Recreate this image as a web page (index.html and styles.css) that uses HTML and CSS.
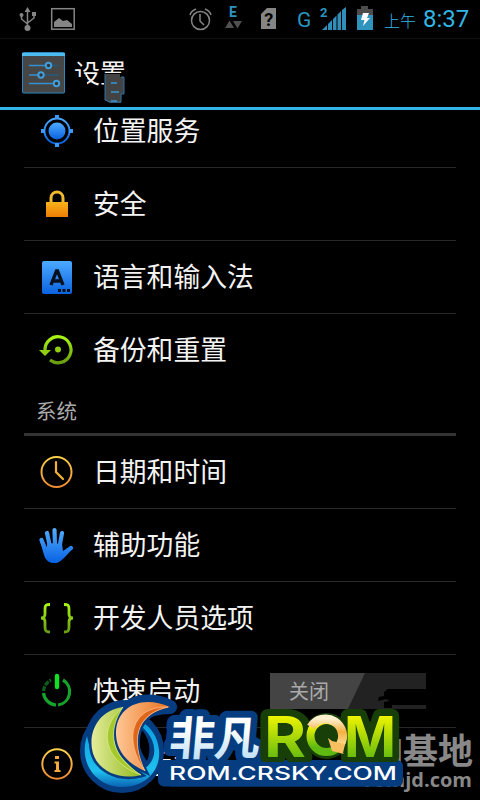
FILE: index.html
```html
<!DOCTYPE html>
<html lang="zh-CN">
<head>
    <meta charset="UTF-8">
    <meta name="viewport" content="width=device-width, initial-scale=1.0">
    <title>设置</title>
    <link rel="stylesheet" href="styles.css">
</head>
<body>
    <div class="screen">
        <!-- 状态栏 -->
        <div class="status-bar">
            <svg class="status-icons" width="380" height="38" viewBox="0 0 380 38">
                <g fill="none" stroke="#858585" stroke-width="1.5">
                    <path d="M27.5 10v18M21.500 15v4l6 5M34 14v4l-6.500 5"/>
                    <rect x="51.700" y="8.700" width="22.500" height="20.500"/>
                    <circle cx="200.500" cy="20.500" r="9"/>
                    <path d="M200 14v7l4 4M190 15q1-4 6-6M211 15q-1-4-6-6"/>
                </g>
                <g fill="#858585">
                    <path d="M27.500 7l3 5h-6zM32 12h4v4h-4z"/>
                    <circle cx="21.500" cy="15" r="2"/>
                    <circle cx="27.500" cy="28" r="3"/>
                    <path d="M54 27v-5l5-4 4 3 4-1 5 4v3z"/>
                    <path d="M267 8h9v21h-15V14z"/>
                </g>
                <path d="M225 28l4.500-7.500 4.500 7.500zM233 21h9l-4.500 7.500z" fill="#505050"/>
                <text class="sim-mark" x="268.700" y="26">?</text>
                <text class="status-e" x="229" y="17">E</text>
                <text class="status-g" x="297" y="27">G</text>
                <text class="status-sim" x="320" y="17">2</text>
                <path d="M322 30l5-5v5zM328 24l4-4v10h-4zM333 19l3.500-3.500V30H333zM337.500 14.500l3.500-3.500v19h-3.500zM342 10l4-3v23h-4z" fill="#2f8fb8"/>
                <path d="M357 15V9h4V6h7v3h5v6z" fill="#4c4c4c"/>
                <path d="M357 15h16v15h-16z" fill="#2f94bd"/>
                <path d="M363 13h6l-2 5h3l-7 8 1.500-6H361z" fill="#fff"/>
            </svg>
            <span class="ampm">上午</span>
            <span class="clock">8:37</span>
        </div>

        <!-- 标题栏 -->
        <div class="title-bar">
            <svg width="44" height="42" viewBox="0 0 44 42">
                <rect x=".5" y=".5" width="42" height="40.500" rx="1" fill="#464646" stroke="#2b87bd"/>
                <path d="M0 1h43v3H0z" fill="#4dbdf0"/>
                <path d="M7 13.500h16M7 23h9M7 31.500h25" stroke="#3490d0" stroke-width="1.500"/>
                <path d="M30 13.500h7M22 23h15" stroke="#28597b" stroke-width="1.500"/>
                <g fill="#333" stroke="#3f9edc" stroke-width="2">
                    <circle cx="26.500" cy="13.500" r="2.700"/>
                    <circle cx="19" cy="23" r="2.700"/>
                    <circle cx="34.500" cy="31.500" r="2.700"/>
                </g>
            </svg>
            <h1>设置</h1>
            <svg class="fragment" width="51" height="32" viewBox="0 0 51 32">
                <path d="M29 0h22v32H29zM0 4h12v12H0z" fill="#000"/>
                <path d="M30 1h15v3h4v17h-3v9H35l-5-3z" fill="#434343"/>
                <path d="M30 1v26l5 2h11v-8h3V4h-3" fill="none" stroke="#2d75a8"/>
                <path d="M36 10h6M36 19h8M36 28h6" stroke="#3796d2" stroke-width="1.500"/>
            </svg>
        </div>

        <!-- 设置列表 -->
        <div class="list">
            <div class="row">
                <svg class="icon" viewBox="0 0 36 36">
                    <circle cx="18" cy="18" r="12.500" fill="none" stroke="url(#blue)" stroke-width="2"/>
                    <circle cx="18" cy="18" r="8.500" fill="url(#blue)"/>
                    <path d="M16 2h4v4h-4zM16 30h4v4h-4zM2 16h4v4H2zM30 16h4v4h-4z" fill="#3c98f8"/>
                </svg>
                <span class="label">位置服务</span>
            </div>
            <div class="row">
                <svg class="icon" viewBox="0 0 36 36">
                    <path d="M12 17v-5c0-8 12-8 12 0v5" fill="none" stroke="#efba2c" stroke-width="3"/>
                    <path d="M7 16h22v15H7z" fill="url(#orange)"/>
                </svg>
                <span class="label">安全</span>
            </div>
            <div class="row">
                <svg class="icon" viewBox="0 0 36 36">
                    <rect x="3" y="2" width="30" height="33" rx="2" fill="url(#blue)"/>
                    <path d="M12 26l5.500-14h1L24 26M14 22h8" fill="none" stroke="#06111f" stroke-width="3.400"/>
                    <path d="M19 30h3v3h-3zM23.500 30h3v3h-3zM28 30h3v3h-3z" fill="#06111f"/>
                </svg>
                <span class="label">语言和输入法</span>
            </div>
            <div class="row last">
                <svg class="icon" viewBox="0 0 36 36">
                    <path d="M6 18A13 13 0 1 1 11 28" fill="none" stroke="url(#green)" stroke-width="3.200"/>
                    <path d="M0 18h12l-6 6z" fill="#91d010"/>
                    <circle cx="19" cy="17.500" r="3" fill="#91d010"/>
                </svg>
                <span class="label">备份和重置</span>
            </div>
            <div class="section">系统</div>
            <div class="row">
                <svg class="icon" viewBox="0 0 36 36">
                    <circle cx="17.500" cy="18" r="15" fill="none" stroke="url(#amber)" stroke-width="2"/>
                    <path d="M17 8v10l7 7" fill="none" stroke="#f5b234" stroke-width="2.200" stroke-linecap="round"/>
                </svg>
                <span class="label">日期和时间</span>
            </div>
            <div class="row">
                <svg class="icon" viewBox="0 0 36 36">
                    <path d="M7 24L2.500 13M11 20L8 6M16 18l-.5-15M20.500 20L23 6M25 26l7-5" stroke="url(#hand)" stroke-width="4.200" stroke-linecap="round"/>
                    <path d="M1 14l4 14c2 7 8 9 13 8 5-2 10-8 15-14l-9 2-1-7-14-1-2 5z" fill="url(#hand)"/>
                </svg>
                <span class="label">辅助功能</span>
            </div>
            <div class="row">
                <svg class="icon" viewBox="0 0 36 36">
                    <path d="M11 4.500C7 4.500 6 5 6 9v5q0 4-4 4 4 0 4 4v5c0 4 1 5 5 5M25 4.500c4 0 5 .5 5 4.500v5q0 4 4 4-4 0-4 4v5c0 4-1 5-5 5" fill="none" stroke="url(#green)" stroke-width="2.800"/>
                </svg>
                <span class="label">开发人员选项</span>
            </div>
            <div class="row">
                <svg class="icon" viewBox="0 0 36 36">
                    <path d="M24 7A13.500 13.500 0 0 1 19 32M17 32A13.500 13.500 0 0 1 4.500 20" fill="none" stroke="#16a32c" stroke-width="3.200"/>
                    <path d="M4.500 18A13.500 13.500 0 0 1 12 7" fill="none" stroke="#0b5f1a" stroke-width="3.200" stroke-dasharray="5 1"/>
                    <path d="M18 3v11" stroke="#13df23" stroke-width="4.400" stroke-linecap="round"/>
                </svg>
                <span class="label">快速启动</span>
                <div class="switch">
                    <span class="switch-thumb">关闭</span>
                    <svg class="switch-noise" width="50" height="30" viewBox="0 0 50 30">
                        <path d="M50 0v5h-9v6h9v16H16v3H8v-6l6-1-4-2-8 2 1-4 5-1v-4l4-3h29V5h9z" fill="#000"/>
                    </svg>
                </div>
            </div>
            <div class="row">
                <svg class="icon" viewBox="0 0 36 36">
                    <circle cx="18" cy="18" r="14.700" fill="none" stroke="url(#amber)" stroke-width="2"/>
                    <path d="M16 10h4v3h-4zM15.500 15.500H20V24h1.500v2h-6v-2H17v-6.500h-1.500z" fill="#f5aa3c"/>
                </svg>
                <span class="label">关于手机</span>
            </div>
        </div>

        <!-- 水印 -->
        <svg class="watermark" width="410" height="130" viewBox="70 670 410 130">
            <defs>
                <linearGradient id="blue" x2="0" y2="1"><stop stop-color="#4caaff"/><stop offset="1" stop-color="#0b62df"/></linearGradient>
                <linearGradient id="hand" gradientUnits="userSpaceOnUse" x1="0" y1="0" x2="0" y2="36"><stop stop-color="#55b0ff"/><stop offset="1" stop-color="#0861e2"/></linearGradient>
                <linearGradient id="orange" x2="0" y2="1"><stop stop-color="#f9b21c"/><stop offset="1" stop-color="#ee7d05"/></linearGradient>
                <linearGradient id="amber" x2="0" y2="1"><stop stop-color="#f9d04a"/><stop offset="1" stop-color="#ef8a35"/></linearGradient>
                <linearGradient id="green" x2="0" y2="1"><stop stop-color="#a8f416"/><stop offset="1" stop-color="#6a9d12"/></linearGradient>
                <linearGradient id="lime" x2="0" y2="1"><stop offset=".2" stop-color="#f0f500"/><stop offset=".85" stop-color="#5fb910"/></linearGradient>
                <linearGradient id="ice" x2="0" y2="1"><stop offset=".3" stop-color="#fff"/><stop offset="1" stop-color="#b4dcf7"/></linearGradient>
                <linearGradient id="peel"><stop stop-color="#ffc795"/><stop offset="1" stop-color="#e8701c"/></linearGradient>
                <linearGradient id="leaf"><stop stop-color="#e4ec9a"/><stop offset="1" stop-color="#8fb91d"/></linearGradient>
                <linearGradient id="sea" x2="0" y2="1"><stop stop-color="#0a9fe0"/><stop offset=".75" stop-color="#1fc0ee"/><stop offset="1" stop-color="#0a63b4"/></linearGradient>
                <linearGradient id="ring" x2="0" y2="1"><stop stop-color="#fff0d0"/><stop offset=".5" stop-color="#f6b040"/><stop offset="1" stop-color="#ffdc96"/></linearGradient>
            </defs>
            <text class="jd-name" x="473" y="764">M基地</text>
            <text class="jd-url" x="472" y="787">romjd.com</text>

            <rect x="158" y="760" width="245" height="26.500" rx="6" fill="#063c80"/>
            <text class="fanfan outline-blue" transform="translate(168 754.500) skewX(-5)" textLength="91">非凡</text>
            <g class="outline-green">
                <text class="rom" x="264" y="756.500" textLength="42" lengthAdjust="spacingAndGlyphs">R</text>
                <circle cx="326.500" cy="736" r="16"/>
                <text class="rom" x="344" y="756.500" textLength="52" lengthAdjust="spacingAndGlyphs">M</text>
            </g>
            <rect x="165" y="762" width="238" height="24.500" rx="6" fill="#063c80"/>
            <text class="fanfan" transform="translate(168 754.500) skewX(-5)" textLength="91" fill="url(#ice)">非凡</text>
            <text class="rom" x="264" y="756.500" textLength="42" lengthAdjust="spacingAndGlyphs" fill="url(#lime)">R</text>
            <circle cx="326.500" cy="736" r="16" fill="#193f08" stroke="url(#lime)" stroke-width="8"/>
            <path d="M311 727a17 17 0 0 1 29 18" fill="none" stroke="url(#ring)" stroke-width="9"/>
            <path d="M328 738l4 3 13 3-2 9 1 1-12-3z" fill="#f7bf60"/>
            <text class="rom" x="344" y="756.500" textLength="52" lengthAdjust="spacingAndGlyphs" fill="url(#lime)">M</text>
            <text class="rom-url" x="169" y="780" textLength="228" lengthAdjust="spacingAndGlyphs">ROM.CRSKY.COM</text>

            <!-- 彩色圆环标志 -->
            <g stroke="#063c80" stroke-width="14" stroke-linejoin="round" fill="#063c80">
                <circle cx="122" cy="751" r="35"/>
                <path d="M123 707c-24 3-34 24-31 42l30 5z"/>
                <path d="M170 707c-28-14-56 0-54 29l12 4c2-18 14-33 42-33z"/>
            </g>
            <path d="M140 728c9 9 12 21 7 33-7-10-11-20-7-33z" fill="#000"/>
            <path d="M87 736C78 764 97 787 122 787s39-18 37-37c-1-12-7-21-15-27l-3 3c24 20 14 49-18 48-20-1-32-16-36-38z" fill="url(#sea)"/>
            <g stroke="#063c80" stroke-width="5" paint-order="stroke">
                <path d="M123 707c-24 3-34 24-31 42 3 20 25 32 49 26-25-18-35-41-18-68z" fill="url(#leaf)"/>
                <path d="M170 707c-29-13-55 0-54 28 1 19 15 30 29 36-14-29-10-57 25-64z" fill="url(#peel)"/>
            </g>
            <path d="M123 707c-27 23-18 55 18 68-29-18-35-42-18-68z" fill="#a5c92c" stroke="#eaf39a" stroke-width=".6"/>
            <path d="M168 707c-37-1-45 33-23 64-14-29-10-57 23-64z" fill="#df6519" stroke="#ffd3a8" stroke-width=".6"/>
        </svg>
    </div>
</body>
</html>
```
FILE: styles.css
```css
body {
    margin: 0;
    background: #000;
    color: #f3f3f3;
    font-family: "Roboto", "Noto Sans CJK SC", sans-serif;
}
.screen {
    position: relative;
    width: 480px;
    height: 800px;
    overflow: hidden;
    background: #000;
}
.status-bar {
    display: flex;
    align-items: center;
    height: 38px;
    border-bottom: 1px solid #111;
    color: #33b5e5;
    white-space: nowrap;
}
.status-icons {
    flex: none;
}
.status-icons text {
    fill: #2c94bf;
}
.status-icons .sim-mark {
    font-size: 18px;
    font-weight: bold;
    text-anchor: middle;
    fill: #000;
}
.status-e {
    font-size: 14px;
    font-weight: bold;
}
.status-g {
    font-size: 21px;
}
.status-sim {
    font-size: 13px;
    font-weight: bold;
}
.ampm {
    margin: 2px 0 0 4px;
    font-size: 16px;
    font-weight: 300;
}
.clock {
    margin-left: 7px;
    font-size: 24px;
}
.title-bar {
    position: relative;
    z-index: 1;
    display: flex;
    align-items: center;
    box-sizing: border-box;
    height: 71px;
    padding: 0 0 0 22px;
    border-bottom: 3px solid #33b5e5;
    background: #000;
}
.title-bar h1 {
    margin: 2px 0 0 8px;
    font-size: 26px;
    font-weight: normal;
    line-height: 36px;
}
.fragment {
    position: absolute;
    left: 75px;
    top: 34px;
}
.list {
    margin: -15px 24px 0;
}
.row {
    display: flex;
    align-items: center;
    box-sizing: border-box;
    height: 73px;
    padding-left: 15px;
    border-bottom: 1px solid #292929;
    font-size: 26.8px;
}
.row.last {
    border-bottom-color: transparent;
}
.icon {
    flex: none;
    width: 36px;
    height: 36px;
    margin-right: 18px;
}
.label {
    padding-bottom: 4px;
}
.section {
    box-sizing: border-box;
    height: 49px;
    padding: 10px 12px 0;
    border-bottom: 3px solid #333;
    color: #aaa;
    font-size: 20.5px;
    line-height: 31px;
}
.switch {
    position: relative;
    width: 156px;
    height: 36px;
    margin: 0 30px 0 auto;
    background: #222;
}
.switch-thumb {
    display: block;
    width: 95px;
    box-sizing: border-box;
    padding-left: 19px;
    background: #444;
    clip-path: polygon(0 0, 100% 0, 82% 100%, 0 100%);
    color: #aaa;
    font-size: 20px;
    line-height: 38px;
    height: 36px;
}
.switch-noise {
    position: absolute;
    right: 0;
    top: 5px;
}
.watermark {
    position: absolute;
    left: 70px;
    top: 670px;
}
.jd-name {
    font-size: 35px;
    font-weight: bold;
    text-anchor: end;
    fill: #888;
}
.jd-url {
    font-family: "Open Sans", sans-serif;
    font-size: 20px;
    font-weight: bold;
    text-anchor: end;
    fill: #888;
}
.fanfan {
    font-size: 46px;
    font-weight: bold;
}
.rom {
    font-family: "Inter", sans-serif;
    font-size: 57px;
    font-weight: bold;
}
.fanfan.outline-blue {
    fill: #063c80;
    stroke: #063c80;
    stroke-width: 14px;
    stroke-linejoin: round;
}
.outline-green {
    fill: #193f08;
    stroke: #193f08;
    stroke-width: 14px;
    stroke-linejoin: round;
}
.rom-url {
    font-family: "Inter", sans-serif;
    font-size: 19px;
    font-weight: 500;
    fill: #fff;
}
```
